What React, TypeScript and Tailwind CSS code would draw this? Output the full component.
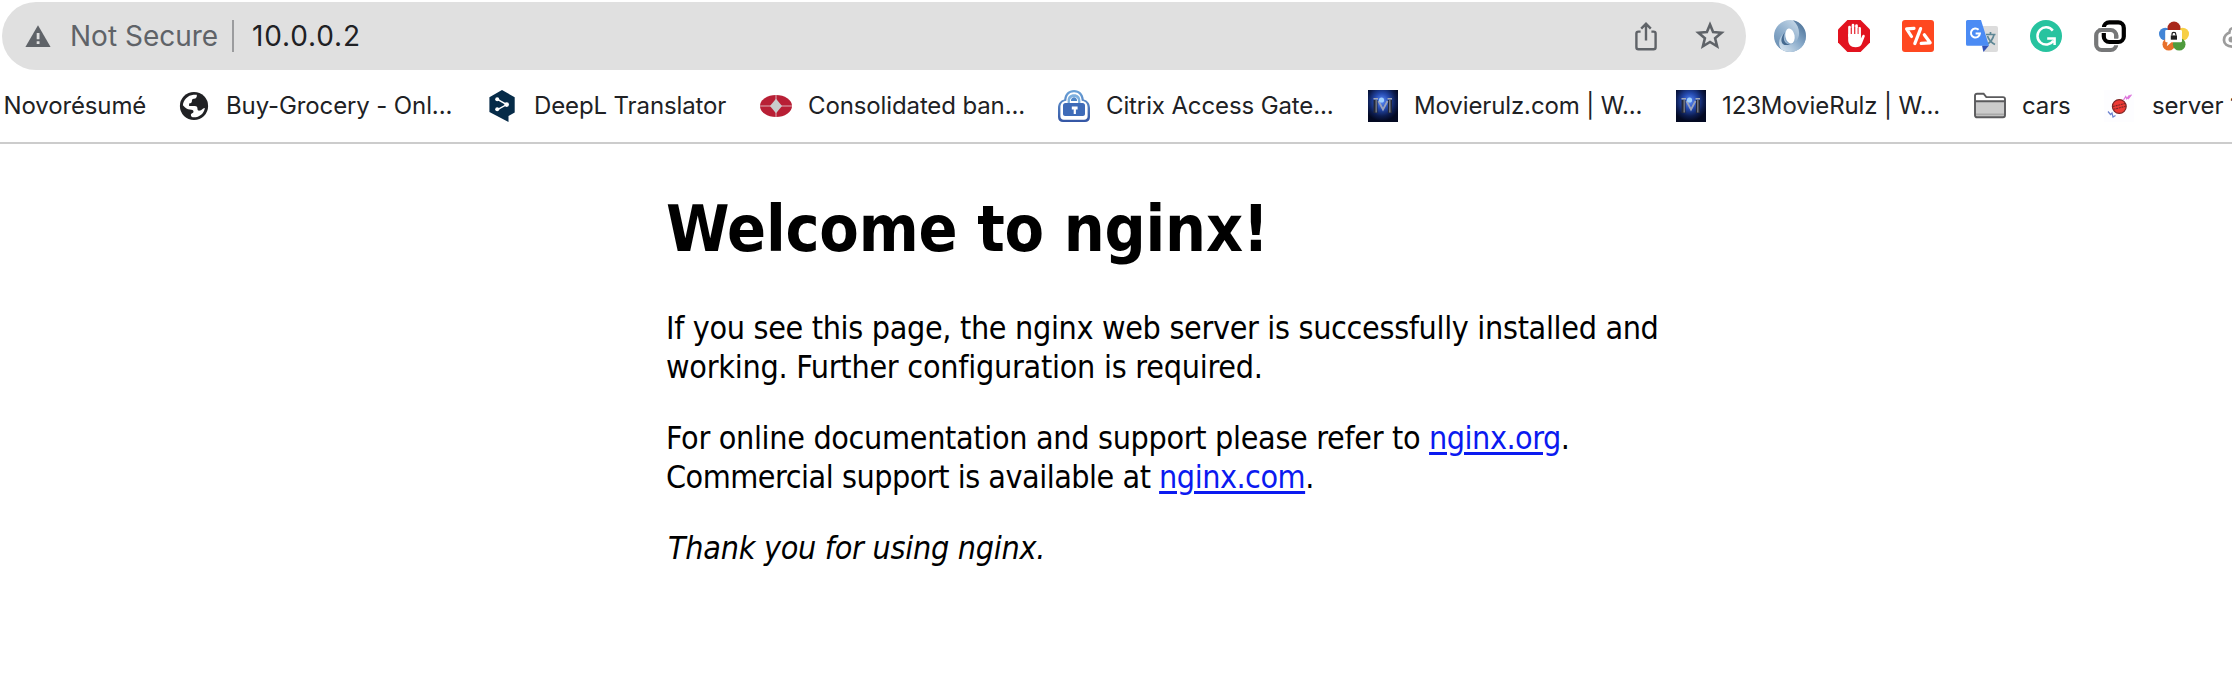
import type { ReactNode } from "react";

function Icon({ children }: { children: ReactNode }) {
  return (
    <svg viewBox="0 0 32 32" className="size-8 shrink-0 overflow-visible" fill="none">
      {children}
    </svg>
  );
}

function WarningIcon() {
  return (
    <Icon>
      <path d="M16 5.2 28.6 27H3.4Z" fill="#5f6368" />
      <path d="M14.7 13h2.8v6.2h-2.8zM14.7 21.2h2.8V24h-2.8z" fill="#e0e0e0" />
    </Icon>
  );
}

function ShareIcon() {
  return (
    <Icon>
      <path
        d="M10.6 11.6H8.400a2 2 0 0 0-2 2v13.600a2 2 0 0 0 2 2h15.200a2 2 0 0 0 2-2V13.600a2 2 0 0 0-2-2h-2.200M16 20.500V4.200M11.200 8.600 16 3.800l4.800 4.800"
        stroke="#5f6368"
        strokeWidth="2.4"
      />
    </Icon>
  );
}

function StarIcon() {
  return (
    <Icon>
      <path
        d="m16 4.600 3.100 7.500 8.400.7-6.400 5.400 2 8.100L16 22l-7.100 4.300 2-8.100-6.400-5.400 8.400-.7Z"
        stroke="#5f6368"
        strokeWidth="2.6"
      />
    </Icon>
  );
}

function RingIcon() {
  return (
    <Icon>
      <defs>
        <linearGradient id="ringA" x1="0" y1="1" x2=".9" y2="0">
          <stop offset="0" stopColor="#5f85ab" />
          <stop offset=".45" stopColor="#8aabca" />
          <stop offset="1" stopColor="#d5e3ef" />
        </linearGradient>
        <linearGradient id="ringB" x1="1" y1="0" x2=".1" y2="1">
          <stop offset="0" stopColor="#3f658c" />
          <stop offset=".5" stopColor="#86a8c8" />
          <stop offset="1" stopColor="#d9e6f1" />
        </linearGradient>
      </defs>
      <circle cx="16" cy="16" r="16" fill="url(#ringA)" />
      <path d="M19 .3C27 2 32 8.500 32 16c0 9-7 16-16 16-3 0-6-.8-8.500-2.500C3.500 25 4.500 17 11 12c-1.500 5-.5 10.500 4 12.500C26 24 29 9 19 .3Z" fill="url(#ringB)" />
      <path d="M11 12c-3 7 0 12.500 5 12.500-7 2.500-12.500-3-5-12.500Z" fill="#456a90" />
      <ellipse cx="16" cy="16" rx="4.600" ry="7.600" transform="rotate(-10 16 16)" fill="#fff" />
    </Icon>
  );
}

function HandIcon() {
  return (
    <Icon>
      <path d="M9.400 0h13.200L32 9.400v13.200L22.600 32H9.400L0 22.600V9.400Z" fill="#e2131f" />
      <path d="M11.500 16V7.200M15 15V5.200M18.500 15V5.600M21.600 16V8.300" stroke="#fff" strokeWidth="2.700" strokeLinecap="round" />
      <path d="M10.150 14h12.800v4.500l1.400-3c.6-1.300 2.900-.6 2.400 1l-3 7.500c-1 2.300-3 3.300-6.200 3.300-5 0-7.400-3-7.400-7.500Z" fill="#fff" />
      <path d="M13.250 8v6M16.750 7v7M20.100 8v6" stroke="#e2131f" strokeWidth=".7" />
    </Icon>
  );
}

function CodeIcon() {
  return (
    <Icon>
      <rect width="32" height="32" rx="3" fill="#ff4820" />
      <path d="M12 8.300 4.600 8.900l4.900 7.600M18.600 8.600l-5.800 15M22.300 14.800l5.900 8-9 .5" stroke="#fff" strokeWidth="3.200" strokeLinecap="round" strokeLinejoin="round" />
    </Icon>
  );
}

function TranslateIcon() {
  return (
    <Icon>
      <path d="M14 6h16a2 2 0 0 1 2 2v22a2 2 0 0 1-2 2H18Z" fill="#dcdcdc" />
      <path d="M20 14.500h9.500M24.500 12v2.500M28 14.800c-1 4-3.500 7.500-7 9.700M21.500 16c1 3 3.500 6.500 7.500 8.500" stroke="#5e8795" strokeWidth="1.700" />
      <path d="M16 25.500h7L17.400 32Z" fill="#3351b5" />
      <path d="M1.500 0H15l8 25.800H1.500A1.500 1.500 0 0 1 0 24.300V1.500A1.500 1.500 0 0 1 1.500 0Z" fill="#4b8bf4" />
      <path d="M12.600 9.800A4.500 4.500 0 1 0 13.900 13.600H9.600" stroke="#fff" strokeWidth="2" />
    </Icon>
  );
}

function ArrowCircleIcon() {
  return (
    <Icon>
      <circle cx="16" cy="16" r="16" fill="#27c39f" />
      <path d="M22.800 10.600A8.600 8.600 0 1 0 23.300 20.600M17.200 18.500h7.400V25" stroke="#fff" strokeWidth="2.500" />
    </Icon>
  );
}

function LinksIcon() {
  return (
    <Icon>
      <rect x="2.200" y="10" width="20" height="20" rx="5.500" stroke="#767778" strokeWidth="4.200" />
      <rect x="9.800" y="2.400" width="20" height="19.600" rx="5.500" stroke="#fff" strokeWidth="6.400" />
      <rect x="9.800" y="2.400" width="20" height="19.600" rx="5.500" stroke="#000" strokeWidth="4.200" />
      <path d="M6.500 10h9.500a5.500 5.500 0 0 1 5.800 5" stroke="#fff" strokeWidth="6" />
      <path d="M5 10.500c1-.4 1.500-.5 2.700-.5h9a5.500 5.500 0 0 1 5.500 5.500V18" stroke="#767778" strokeWidth="4.200" />
    </Icon>
  );
}

function FlowerLockIcon() {
  return (
    <Icon>
      <circle cx="7.300" cy="14" r="6.300" fill="#4285d6" />
      <circle cx="24.700" cy="14" r="6.300" fill="#f7cf46" />
      <circle cx="10.800" cy="24.300" r="6.300" fill="#e8702a" />
      <circle cx="21.200" cy="24.300" r="6.300" fill="#4f9b3d" />
      <circle cx="16" cy="8" r="6.500" fill="#a9281b" />
      <path d="M8.500 10h14.200a1.300 1.300 0 0 1 1.300 1.300v9.700a1.300 1.300 0 0 1-1.300 1.300H13.500L8.800 26.200l.8-3.900H8.500A1.300 1.300 0 0 1 7.200 21v-9.700A1.300 1.300 0 0 1 8.500 10Z" fill="#fff" />
      <path d="M12.800 15.400h6.200v4.300h-6.200z" fill="#1f1f1f" />
      <path d="M14 15.500v-1.200a1.900 1.900 0 0 1 3.800 0v1.200" stroke="#1f1f1f" strokeWidth="1.200" />
    </Icon>
  );
}

function RobotIcon() {
  return (
    <Icon>
      <path d="M11.500 26.500C5 27 1.800 23.500 2 19.800c.2-3.600 2.800-6.500 6.500-7.500" stroke="#9c9c9c" strokeWidth="2.700" />
      <path d="M7.500 12.500c0-3 1.500-4.500 4-4.500" stroke="#9c9c9c" strokeWidth="2.500" />
      <circle cx="9.500" cy="19.500" r="3" fill="#9c9c9c" />
    </Icon>
  );
}

function GlobeIcon() {
  return (
    <Icon>
      <circle cx="16" cy="16" r="14.100" fill="#202124" />
      <path
        d="M4.900 15.300C5.300 10 9.700 5.300 15.500 4.800h3.300c.4 2.400-.6 3.900-2.900 4-1.700.1-2 .8-2 2.300 0 1.700-.7 2.200-2.800 2.300v2.700h5.600c2.200 0 2.800 1 2.800 3 0 1.400 1 1.800 2.500 1.500 1.500-.3 2.200-2 4.900-2.600-.9 5.600-5.400 9.300-11 9.300-2 0-3-.8-3-2.300 0-1.800 2.500-1.400 2.600-3.200.1-1.600-1.400-2.200-3.700-2.300-2.500 0-4-1.200-6.900-4.200Z"
        fill="#fff"
      />
    </Icon>
  );
}

function HexagonIcon() {
  return (
    <Icon>
      <path d="M16 0 28.700 7.200v15.300L22.500 26v6L3.400 22.100V7.200Z" fill="#062b48" />
      <path d="m11 9.200 9.700 5.400-9.700 5.200" stroke="#fff" strokeWidth="1.500" />
      <g fill="#fff">
        <circle cx="11.200" cy="9.300" r="2" />
        <circle cx="20.700" cy="14.600" r="2.300" />
        <circle cx="11.200" cy="19.300" r="2" />
      </g>
    </Icon>
  );
}

function OvalIcon() {
  return (
    <Icon>
      <ellipse cx="16" cy="16" rx="16" ry="11" fill="#b81f35" />
      <path d="M0 16h32M16 5v22" stroke="#cf7f8b" strokeWidth="1.500" />
      <path d="m16 8.800 6 7.200-6 7.200-6-7.200Z" fill="#c9cccd" />
    </Icon>
  );
}

function PadlockIcon() {
  return (
    <Icon>
      <defs>
        <linearGradient id="lock" x1="0" y1="0" x2="0" y2="1">
          <stop offset="0" stopColor="#6ba3d8" />
          <stop offset="1" stopColor="#3455a4" />
        </linearGradient>
      </defs>
      <path d="M16 0c5.500 0 9.400 3.800 9.800 9.400 3.800.9 6.200 4 6.200 8.600v9c0 3.200-2 5-5 5H5c-3 0-5-1.800-5-5v-9c0-4.600 2.400-7.700 6.200-8.600C6.600 3.800 10.500 0 16 0Z" fill="url(#lock)" />
      <path d="M16 2.200c4.500 0 7.500 3.300 7.700 8.600 3.700.4 5.900 2.700 5.900 6.700v8.700c0 2.300-1.300 3.500-3.500 3.500H5.900c-2.200 0-3.500-1.200-3.500-3.500v-8.700c0-4 2.200-6.300 5.900-6.700C8.500 5.500 11.500 2.200 16 2.200Z" fill="#fff" />
      <path d="M9.600 13.500v-2.600c0-4.300 2.400-6.600 6.400-6.600s6.400 2.300 6.400 6.600v2.600h-2.300v-2.300c0-2.700-1.500-4.300-4.100-4.300s-4.100 1.600-4.100 4.300v2.300Z" fill="#7db0df" />
      <path d="M12.900 11c0-5 6.200-5 6.200 0Z" fill="#4e86c8" />
      <path d="M7.500 13h17a2.500 2.500 0 0 1 2.500 2.500V24c0 1.300-.9 2-2 2H7c-1.100 0-2-.7-2-2v-8.500A2.500 2.500 0 0 1 7.500 13Z" fill="#3e6bb8" />
      <path d="M13.800 16.600h5.800v3h-1.700V24h-2.200v-4.400h-1.900Z" fill="#fff" />
    </Icon>
  );
}

function MovieIcon() {
  return (
    <Icon>
      <defs>
        <radialGradient id="movie" cx=".46" cy=".35" r=".62">
          <stop offset="0" stopColor="#5c8dff" />
          <stop offset=".4" stopColor="#2449ad" />
          <stop offset=".75" stopColor="#0c1c4f" />
          <stop offset="1" stopColor="#030922" />
        </radialGradient>
      </defs>
      <path d="M2 0h30v32H2z" fill="url(#movie)" />
      <path d="M9.500 23V10M24 23V10" stroke="#23283a" strokeWidth="4" />
      <path d="M7.500 8.800H12M21.500 8.800H26" stroke="#a3a8b4" strokeWidth="1.600" />
      <path d="M10.200 10v12.500M23.800 10v12.500" stroke="#777c88" strokeWidth="1.400" />
      <path d="m12.500 11 4.500 8.500 4.500-8.500" stroke="#99a3bd" strokeWidth="1.800" />
      <circle cx="15.500" cy="10" r="2.600" fill="#9fd0ff" />
    </Icon>
  );
}

function FolderIcon() {
  return (
    <Icon>
      <path d="M1 26.500V5.700a2 2 0 0 1 2-2h6.600l2.700 3.400H29a2 2 0 0 1 2 2v17.400Z" fill="#fff" />
      <path d="M1 11.200h30v14a2 2 0 0 1-2 2H3a2 2 0 0 1-2-2Z" fill="#cbcbcb" />
      <path d="M2 24.400h28" stroke="#a9a9a9" strokeWidth="1.800" />
      <path d="M1 11.200h30M1 25.300V5.700a2 2 0 0 1 2-2h6.600l2.700 3.400H29a2 2 0 0 1 2 2v16.200a2 2 0 0 1-2 2H3a2 2 0 0 1-2-2Z" stroke="#5a5a5c" strokeWidth="1.900" />
    </Icon>
  );
}

function BallIcon() {
  return (
    <Icon>
      <path d="M0 0h30v32H0z" fill="#fdfdff" />
      <circle cx="15.300" cy="16.500" r="6.900" fill="#ee3a35" stroke="#7c2727" strokeWidth="1.200" />
      <path d="m9 16.500 12-3M9.600 19.300l12-3" stroke="#7c2727" strokeWidth="1.100" strokeDasharray="2 .7" />
      <path d="m19.500 10 2.200-3.500 1 2.300 2.800-3.700M24 9l3.500-4.300" stroke="#dd74dc" strokeWidth="1.200" />
      <path d="m4 21.500 2.500 3 1.500-1.500 1 4 2.500-1.500" stroke="#6d84cf" strokeWidth="1.200" />
    </Icon>
  );
}

function Bookmark({ icon, label, width }: { icon: ReactNode; label: string; width: string }) {
  return (
    <a className={`flex shrink-0 items-center gap-4 ${width}`}>
      {icon}
      <span className="whitespace-pre">{label}</span>
    </a>
  );
}

function Link({ children }: { children: ReactNode }) {
  return (
    <a className="tracking-[-0.49px] text-[#0b1af0] underline decoration-[3px] underline-offset-[3px]">{children}</a>
  );
}

export default function App() {
  return (
    <div className="flex h-[684px] w-[2232px] flex-col overflow-hidden bg-white font-['Inter',sans-serif] text-[#202124]">
      <header className="flex h-[72px] shrink-0 items-center pl-0.5">
        <div className="flex h-[68px] w-[1744px] shrink-0 items-center rounded-full bg-[#e0e0e0] pl-5 text-[28px]">
          <WarningIcon />
          <span className="ml-4 w-[162px] whitespace-nowrap text-[#5f6368]">Not Secure</span>
          <span className="h-8 w-0.5 bg-[#9b9c9e]" />
          <span className="ml-[18px] grow tracking-[0.85px]">10.0.0.2</span>
          <div className="mr-5 flex gap-8">
            <ShareIcon />
            <StarIcon />
          </div>
        </div>
        <div className="ml-7 flex gap-8">
          <RingIcon />
          <HandIcon />
          <CodeIcon />
          <TranslateIcon />
          <ArrowCircleIcon />
          <LinksIcon />
          <FlowerLockIcon />
          <RobotIcon />
        </div>
      </header>

      <nav className="flex h-[72px] shrink-0 items-center border-b-2 border-[#cccccc] pb-0.5 text-[24px] tracking-[-0.12px]">
        <span className="w-[178px] shrink-0 pl-[3.500px]">Novorésumé</span>
        <Bookmark icon={<GlobeIcon />} label="Buy-Grocery - Onl..." width="w-[308px]" />
        <Bookmark icon={<HexagonIcon />} label="DeepL Translator" width="w-[274px]" />
        <Bookmark icon={<OvalIcon />} label="Consolidated ban..." width="w-[298px]" />
        <Bookmark icon={<PadlockIcon />} label="Citrix Access Gate..." width="w-[308px]" />
        <Bookmark icon={<MovieIcon />} label="Movierulz.com | W..." width="w-[308px]" />
        <Bookmark icon={<MovieIcon />} label="123MovieRulz | W..." width="w-[300px]" />
        <Bookmark icon={<FolderIcon />} label="cars" width="w-[130px]" />
        <Bookmark icon={<BallIcon />} label="server 1" width="w-[160px]" />
      </nav>

      <main className="ml-[666px] w-[1120px] pt-[43px] font-['DejaVu_Sans_Condensed','DejaVu_Sans',sans-serif] text-[32px] leading-[39px] text-black">
        <h1 className="text-[64px] leading-[84px] font-bold tracking-[-0.2px]">Welcome to nginx!</h1>
        <p className="mt-[38px] tracking-[-0.330px]">
          If you see this page, the nginx web server is successfully installed and
          <br />
          <span className="tracking-[-0.25px]">working. Further configuration is required.</span>
        </p>
        <p className="mt-8 tracking-[-0.326px]">
          For online documentation and support please refer to <Link>nginx.org</Link>.
          <br />
          <span className="tracking-[-0.49px]">Commercial support is available at </span>
          <Link>nginx.com</Link>.
        </p>
        <p className="mt-8 pl-0.5 tracking-[-0.27px] italic">Thank you for using nginx.</p>
      </main>
    </div>
  );
}
